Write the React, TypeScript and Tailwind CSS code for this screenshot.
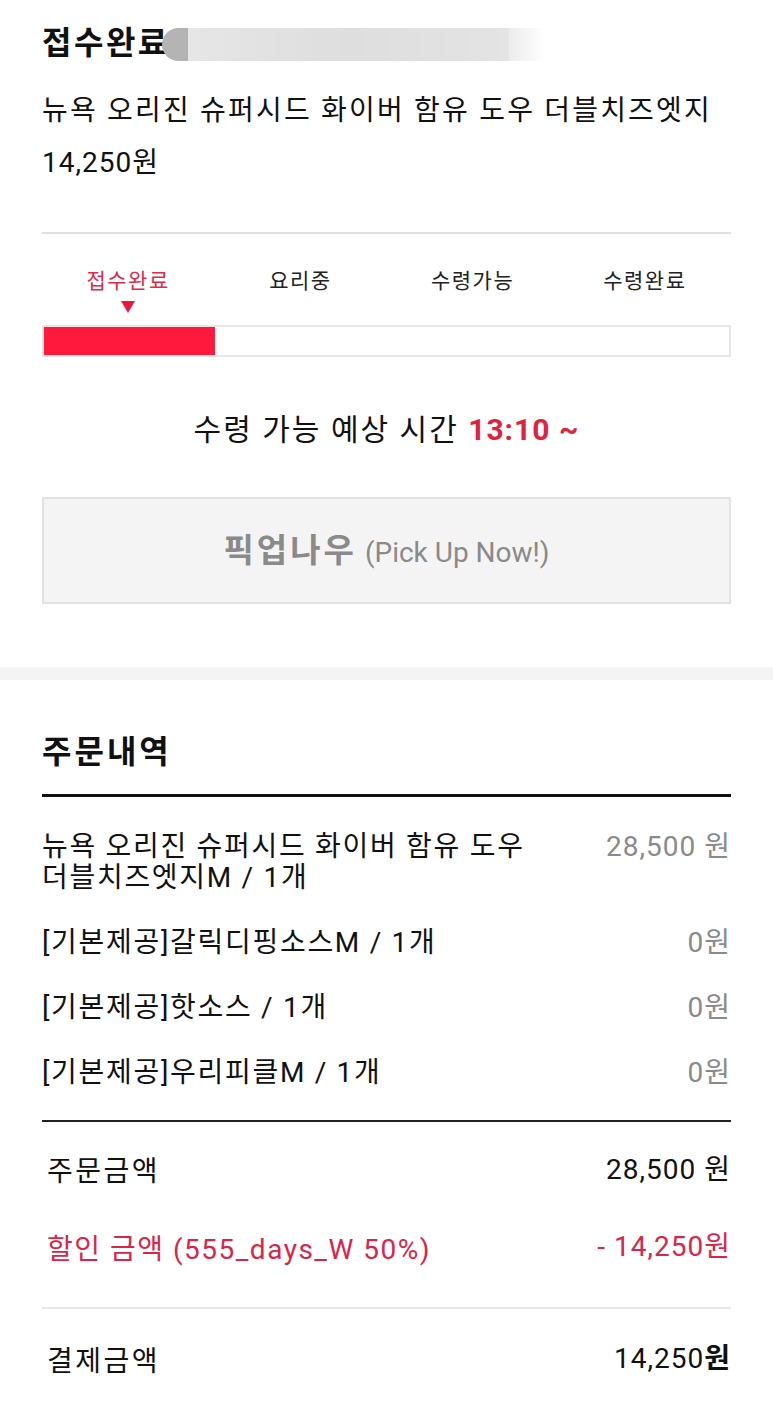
const FONT = "font-['Roboto','Noto_Sans_CJK_KR',sans-serif]";

const steps = ["접수완료", "요리중", "수령가능", "수령완료"];

const items = [
  { name: "뉴욕 오리진 슈퍼시드 화이버 함유 도우 더블치즈엣지M / 1개", price: "28,500 원" },
  { name: "[기본제공]갈릭디핑소스M / 1개", price: "0원" },
  { name: "[기본제공]핫소스 / 1개", price: "0원" },
  { name: "[기본제공]우리피클M / 1개", price: "0원" },
];

export default function App() {
  const current = 0;

  return (
    <div className={`${FONT} min-h-[1402px] w-[773px] bg-white text-[#111]`}>
      {/* status section */}
      <section className="px-[42px] pt-[24px] pb-[63px]">
        <div className="flex items-center">
          <h1 className="text-[32px] font-bold leading-[38px] tracking-[2.5px]">접수완료</h1>
          {/* masked store name */}
          <div className="-ml-[8px] mt-[2px] flex h-[33px] w-[383px] items-stretch overflow-hidden">
            <div className="w-[26px] rounded-l-full bg-[#b4b4b4]" />
            <div className="flex-1 bg-gradient-to-r from-[#e6e6e6] via-[#dedede] to-[#e4e4e4]" />
            <div className="w-[36px] bg-gradient-to-r from-[#ececec] to-white" />
          </div>
        </div>
        <p className="mt-[23px] text-[28px] leading-[52px] tracking-[2.2px]">
          뉴욕 오리진 슈퍼시드 화이버 함유 도우 더블치즈엣지
        </p>
        <p className="text-[28px] leading-[52px] tracking-[1px]">14,250원</p>

        <div className="mt-[43px] h-[2px] bg-[#e0e0e0]" />

        <div className="mt-[33px] grid grid-cols-4">
          {steps.map((s, i) => (
            <div key={s} className="flex flex-col items-center">
              <span
                className={`text-[21px] leading-[28px] tracking-[1.5px] ${
                  i === current ? "text-[#e0284a]" : "text-[#222]"
                }`}
              >
                {s}
              </span>
              <div className="mt-[6px] h-[12px]">
                {i === current && (
                  <svg width="16" height="12" viewBox="0 0 16 12">
                    <path d="M1 0 H15 L8 12 Z" fill="#e8173c" />
                  </svg>
                )}
              </div>
            </div>
          ))}
        </div>

        <div className="mt-[12px] h-[32px] border-2 border-[#e6e6e6] bg-white">
          <div className="h-full w-1/4 bg-[#ff1a3d]" />
        </div>

        <p className="mt-[55px] text-center text-[30px] leading-[36px] tracking-[2px]">
          수령 가능 예상 시간{" "}
          <span className="font-bold tracking-[1px] text-[#e0223f]">13:10 ~</span>
        </p>

        <button
          type="button"
          className="mt-[49px] flex h-[107px] w-full items-center justify-center gap-[8px] border-2 border-[#e2e2e2] bg-[#f4f4f4] text-[#8a8a8a]"
        >
          <span className="text-[33px] font-bold tracking-[3px]">픽업나우</span>
          <span className="mt-[4px] text-[28px]">(Pick Up Now!)</span>
        </button>
      </section>

      <div className="h-[13px] bg-[#f4f4f4]" />

      {/* order details */}
      <section className="px-[42px] pt-[52px] pb-[30px]">
        <h2 className="text-[32px] font-bold leading-[40px] tracking-[3px]">주문내역</h2>
        <div className="mt-[22px] h-[3px] bg-[#111]" />

        <ul className="mt-[34px] flex flex-col gap-[34px]">
          {items.map((it) => (
            <li
              key={it.name}
              className="flex items-start justify-between text-[28px] leading-[31px] tracking-[1.7px]"
            >
              <span className="max-w-[540px] break-keep">{it.name}</span>
              <span className="shrink-0 tracking-[1px] text-[#8a8a8a]">{it.price}</span>
            </li>
          ))}
        </ul>

        <div className="mt-[32px] h-[2px] bg-[#222]" />

        <div className="flex flex-col gap-[42px] pt-[32px] pl-[5px] text-[28px] leading-[36px] tracking-[1.5px]">
          <div className="flex justify-between">
            <span className="tracking-[2.5px]">주문금액</span>
            <span className="-mt-[2px] tracking-[1px]">28,500 원</span>
          </div>
          <div className="flex justify-between text-[#d9254a]">
            <span>할인 금액 (555_days_W 50%)</span>
            <span className="-mt-[3px] tracking-[1px]">- 14,250원</span>
          </div>
        </div>

        <div className="mt-[39px] h-[2px] bg-[#e6e6e6]" />

        <div className="flex justify-between pt-[35px] pl-[5px] text-[28px] leading-[36px]">
          <span className="tracking-[2.5px]">결제금액</span>
          <span className="-mt-[3px] tracking-[1px]">
            14,250<span className="font-bold">원</span>
          </span>
        </div>
      </section>
    </div>
  );
}
